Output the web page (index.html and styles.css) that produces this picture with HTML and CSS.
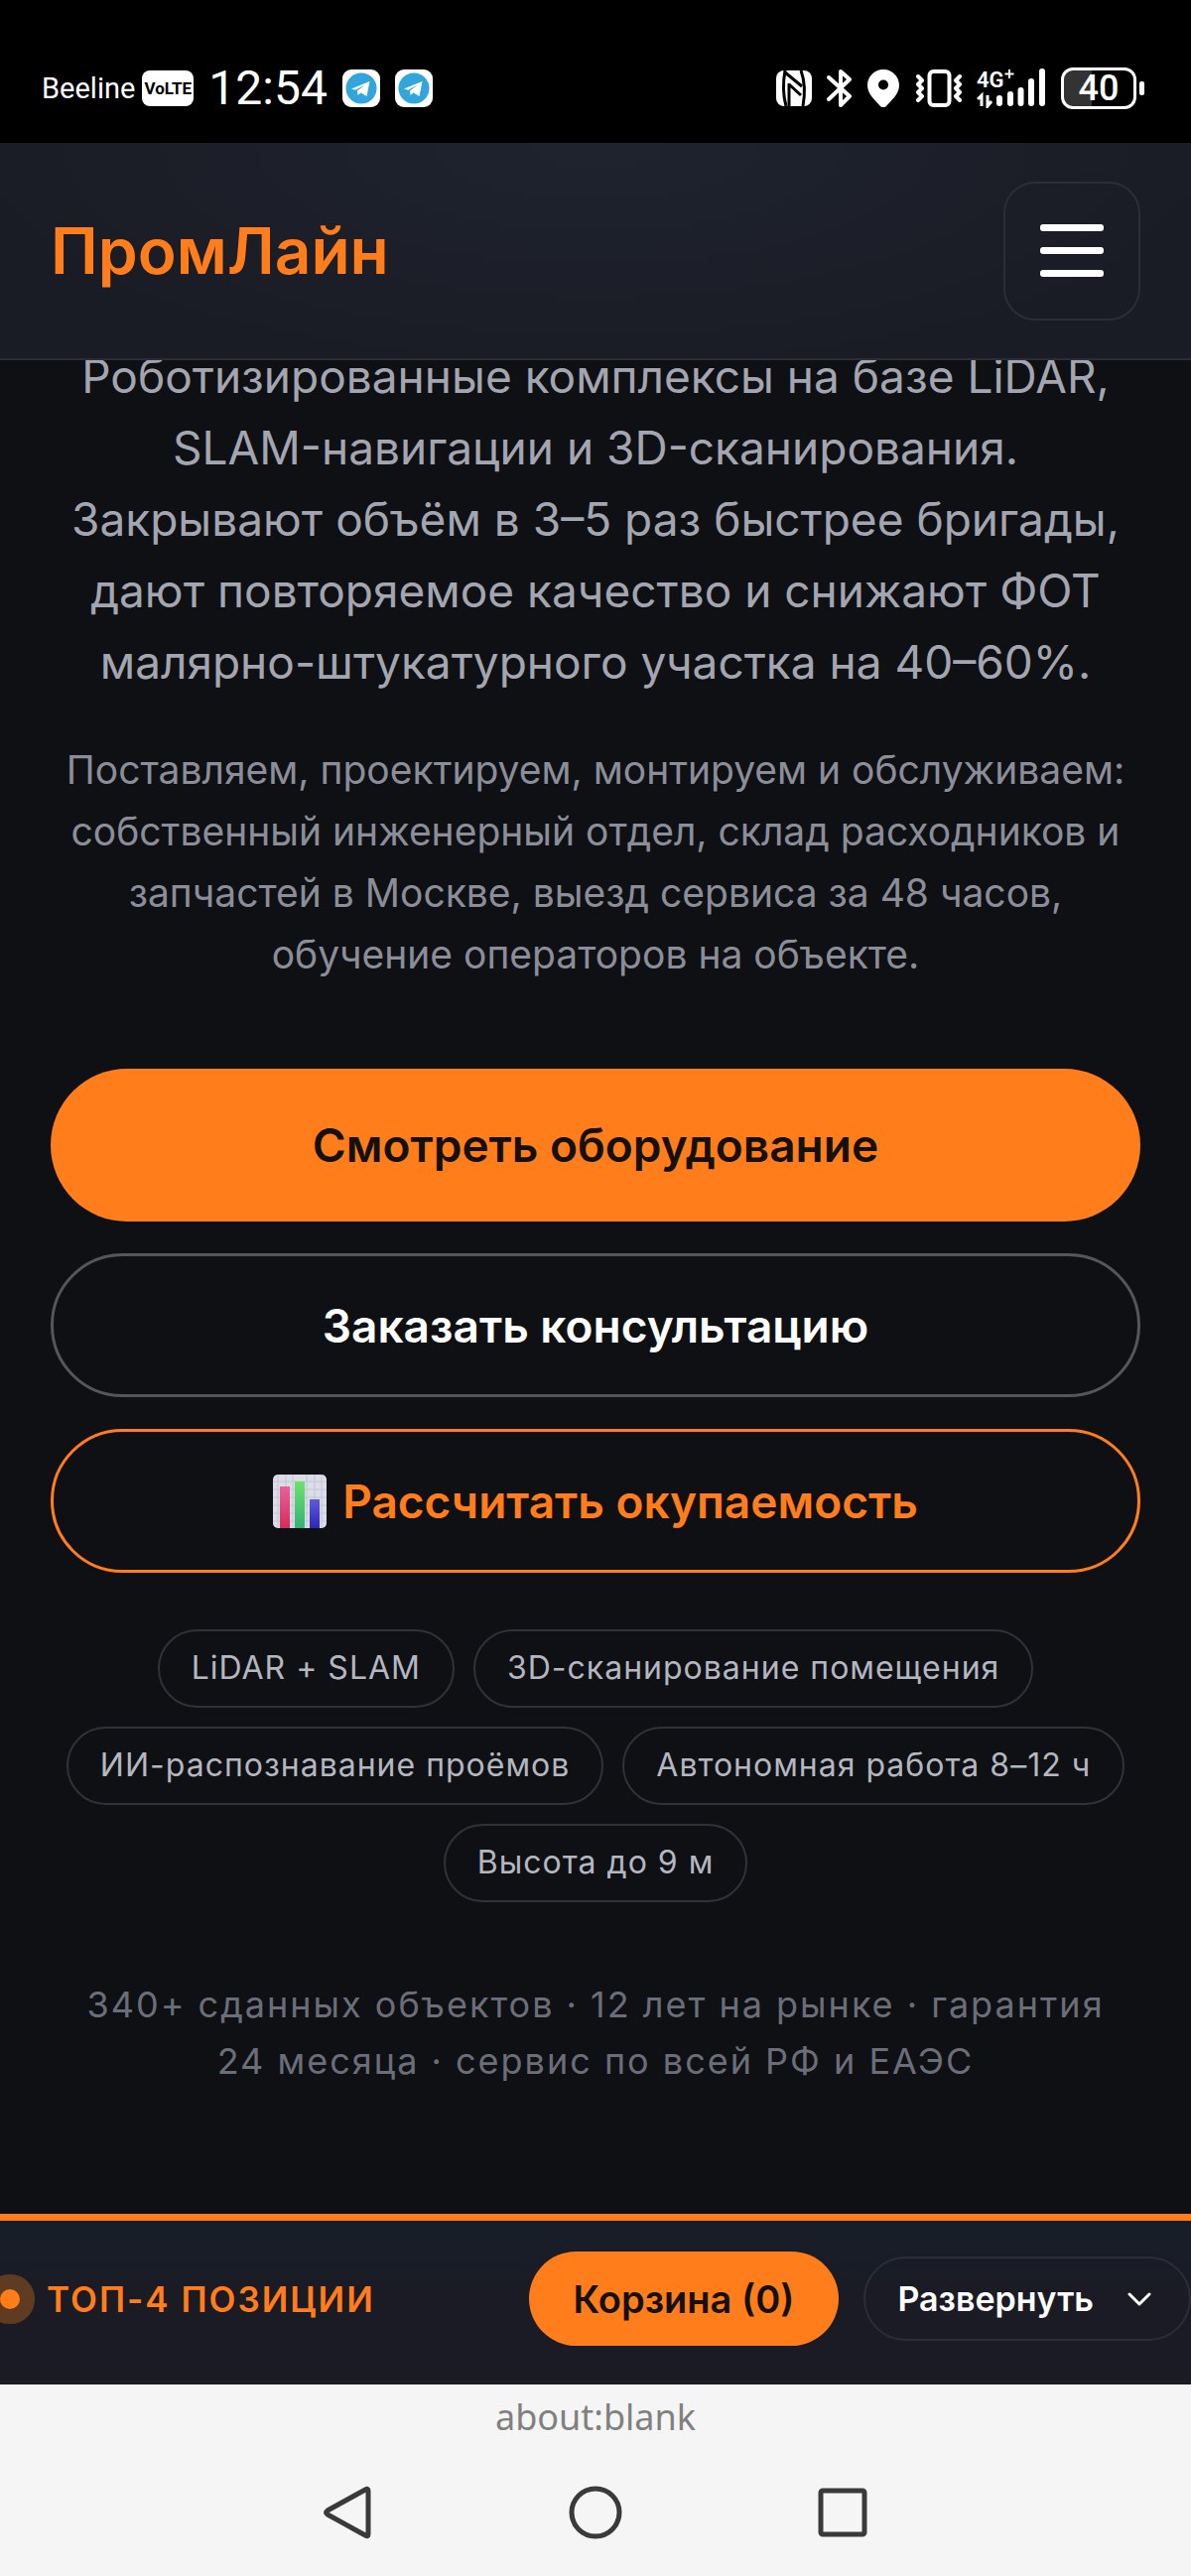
FILE: index.html
```html
<!DOCTYPE html>
<html lang="ru">
<head>
    <meta charset="UTF-8">
    <meta name="viewport" content="width=device-width, initial-scale=1.0">
    <title>ПромЛайн</title>
    <link rel="stylesheet" href="styles.css">
</head>
<body>

    <div class="status-bar">
        <div class="status-left">
            <span class="carrier">Beeline</span>
            <span class="volte">VoLTE</span>
            <span class="clock">12:54</span>
            <svg class="app-icon" viewBox="0 0 38 38">
                <rect width="38" height="38" rx="9" fill="#fff"/>
                <circle cx="19" cy="19" r="15.500" fill="#32a5dc"/>
                <path d="M9 19.500 27.500 12 24.500 27 18.500 23.500 15.500 26 15 21.500 23 15.500 13 20.800Z" fill="#fff"/>
            </svg>
            <svg class="app-icon" viewBox="0 0 38 38">
                <rect width="38" height="38" rx="9" fill="#fff"/>
                <circle cx="19" cy="19" r="15.500" fill="#32a5dc"/>
                <path d="M9 19.500 27.500 12 24.500 27 18.500 23.500 15.500 26 15 21.500 23 15.500 13 20.800Z" fill="#fff"/>
            </svg>
        </div>
        <div class="status-right">
            <!-- NFC -->
            <svg width="36" height="38" viewBox="0 0 36 38">
                <rect y="1" width="36" height="36" rx="8" fill="#fff"/>
                <path d="M9 1C7 12 7 26 10 37M25 1C29 12 29 26 27 37" fill="none" stroke="#000" stroke-width="3"/>
                <path d="M9 3 26 17M13 15 25 26M13 14V37" fill="none" stroke="#000" stroke-width="3"/>
            </svg>
            <!-- Bluetooth -->
            <svg width="26" height="38" viewBox="0 0 26 38">
                <path d="M2 8 23 27 14 36V2L23 10 2 30" fill="none" stroke="#fff" stroke-width="4" stroke-linejoin="round" stroke-linecap="round"/>
            </svg>
            <!-- Геолокация -->
            <svg width="34" height="38" viewBox="0 0 34 38">
                <path fill-rule="evenodd" d="M16 0C7 0 0 7 0 16 0 25 8 31 13 37Q16 40 19 37C24 31 32 25 32 16 32 7 25 0 16 0ZM16 10.500A5 5 0 1 1 16 20.500 5 5 0 1 1 16 10.500Z" fill="#fff"/>
            </svg>
            <!-- Вибрация -->
            <svg width="46" height="38" viewBox="0 0 46 38">
                <rect x="13.500" y="2" width="20" height="34" rx="4" fill="none" stroke="#fff" stroke-width="4"/>
                <path d="M2 7 6 11 2 15 6 19 2 23 6 27 2 31M44 7 40 11 44 15 40 19 44 23 40 27 44 31" fill="none" stroke="#fff" stroke-width="4" stroke-linecap="round" stroke-linejoin="round"/>
            </svg>
            <!-- Сигнал -->
            <svg class="signal" width="70" height="40" viewBox="0 0 70 40">
                <text x="0" y="19">4G</text>
                <path d="M33 1V10M28.500 5.500H37.500" stroke="#fff" stroke-width="2"/>
                <path d="M5 38V27L1 31M11 27V38L15 33" fill="none" stroke="#fff" stroke-width="3"/>
                <path d="M23 30V35M34 26V35M44.500 22V35M55 13V35M66 3V35" stroke="#fff" stroke-width="6" stroke-linecap="round"/>
            </svg>
            <span class="battery">40</span>
        </div>
    </div>

    <header class="header">
        <a class="logo" href="#">ПромЛайн</a>
        <button class="menu-btn" type="button" aria-label="Меню">
            <span></span>
            <span></span>
            <span></span>
        </button>
    </header>

    <main class="hero">
        <div class="hero-content">
            <p class="lead">Роботизированные комплексы на базе LiDAR, SLAM-навигации и 3D-сканирования. Закрывают объём в 3–5 раз быстрее бригады, дают повторяемое качество и снижают ФОТ малярно-штукатурного участка на 40–60%.</p>
            <p class="sub">Поставляем, проектируем, монтируем и обслуживаем: собственный инженерный отдел, склад расходников и запчастей в Москве, выезд сервиса за 48 часов, обучение операторов на объекте.</p>

            <div class="actions">
                <a class="btn btn-primary" href="#">Смотреть оборудование</a>
                <a class="btn btn-outline" href="#">Заказать консультацию</a>
                <a class="btn btn-accent" href="#">
                    <svg width="54" height="54" viewBox="0 0 54 54">
                        <defs>
                            <linearGradient id="pink" x2="0" y2="1"><stop stop-color="#e8629a"/><stop offset="1" stop-color="#d32d5b"/></linearGradient>
                            <linearGradient id="green" x2="0" y2="1"><stop stop-color="#6be368"/><stop offset="1" stop-color="#35b277"/></linearGradient>
                            <linearGradient id="blue" x2="0" y2="1"><stop stop-color="#5f5bdc"/><stop offset="1" stop-color="#2d27b4"/></linearGradient>
                        </defs>
                        <rect width="54" height="54" rx="5" fill="#dcdde8"/>
                        <path d="M0 7H54M0 15H54M0 23H54M0 31H54M0 39H54M0 47H54M5 0V54M13 0V54M20 0V54M34 0V54M42 0V54M49 0V54" stroke="#c3c6d4"/>
                        <rect x="7" y="12" width="10" height="42" fill="url(#pink)"/>
                        <rect x="22" y="7" width="10" height="47" fill="url(#green)"/>
                        <rect x="37" y="25" width="10" height="29" fill="url(#blue)"/>
                    </svg>
                    <span>Рассчитать окупаемость</span>
                </a>
            </div>

            <ul class="tags">
                <li>LiDAR + SLAM</li>
                <li>3D-сканирование помещения</li>
                <li>ИИ-распознавание проёмов</li>
                <li>Автономная работа 8–12 ч</li>
                <li>Высота до 9 м</li>
            </ul>

            <p class="facts">340+ сданных объектов · 12 лет на рынке · гарантия 24&nbsp;месяца · сервис по всей РФ и ЕАЭС</p>
        </div>
    </main>

    <section class="cart-bar">
        <div class="cart-title">
            <span class="dot"></span>
            ТОП-4 ПОЗИЦИИ
        </div>
        <div class="cart-actions">
            <button class="cart-btn" type="button">Корзина (0)</button>
            <button class="expand-btn" type="button">
                Развернуть
                <svg width="24" height="16" viewBox="0 0 24 16">
                    <path d="M2 3 12 13 22 3" fill="none" stroke="#fff" stroke-width="3" stroke-linecap="round" stroke-linejoin="round"/>
                </svg>
            </button>
        </div>
    </section>

    <footer class="browser">
        <div class="url">about:blank</div>
        <nav class="nav-keys">
            <button type="button" aria-label="Назад">
                <svg width="54" height="54" viewBox="0 0 54 54"><path d="M47 5Q47 2 44 4L6 25Q3 27 6 29L44 50Q47 52 47 49Z"/></svg>
            </button>
            <button type="button" aria-label="Домой">
                <svg width="54" height="54" viewBox="0 0 54 54"><circle cx="27" cy="27" r="24"/></svg>
            </button>
            <button type="button" aria-label="Недавние">
                <svg width="54" height="54" viewBox="0 0 54 54"><rect x="5" y="5" width="44" height="44" rx="2"/></svg>
            </button>
        </nav>
    </footer>

</body>
</html>
```
FILE: styles.css
```css
* {
    box-sizing: border-box;
}

body {
    margin: 0;
    min-height: 100vh;
    display: flex;
    flex-direction: column;
    background-color: #0f1013;
    color: #fff;
    font-family: Inter, "Noto Sans", sans-serif;
}

p, ul {
    margin: 0;
    padding: 0;
}

button {
    font-family: inherit;
    cursor: pointer;
}

/* Системная строка */
.status-bar {
    height: 144px;
    padding: 34px 55px 0 42px;
    display: flex;
    justify-content: space-between;
    align-items: center;
    background-color: #000;
    font-family: Roboto, sans-serif;
}

.status-left, .status-right {
    display: flex;
    align-items: center;
    gap: 15px;
}

.carrier {
    font-size: 29px;
}

.volte {
    width: 52px;
    height: 36px;
    margin-left: -8px;
    border-radius: 8px;
    background-color: #fff;
    color: #000;
    font-size: 17px;
    font-weight: bold;
    line-height: 36px;
    text-align: center;
}

.clock {
    font-size: 48px;
    line-height: 48px;
}

.app-icon {
    width: 38px;
    height: 38px;
}

.signal text {
    fill: #fff;
    font-size: 22px;
    font-weight: 600;
}

.battery {
    position: relative;
    width: 76px;
    height: 42px;
    border: 3px solid #fff;
    border-radius: 12px;
    background: linear-gradient(to right, #333 40%, #000 40%);
    font-size: 36px;
    font-weight: 500;
    line-height: 36px;
    text-align: center;
}

.battery::after {
    content: "";
    position: absolute;
    top: 11px;
    right: -11px;
    width: 5px;
    height: 14px;
    border-radius: 2px;
    background-color: #fff;
}

/* Шапка */
.header {
    position: relative;
    z-index: 1;
    height: 219px;
    padding: 0 51px;
    display: flex;
    justify-content: space-between;
    align-items: center;
    background: radial-gradient(ellipse at 50% 0, #1e232d, #1a1c25 75%);
    border-bottom: 2px solid #2b2e37;
}

.logo {
    color: #ff7d1a;
    font-size: 64px;
    font-weight: 600;
    text-decoration: none;
}

.menu-btn {
    width: 138px;
    height: 140px;
    display: flex;
    flex-direction: column;
    justify-content: center;
    align-items: center;
    gap: 16px;
    background: none;
    border: 2px solid #2b2e37;
    border-radius: 32px;
}

.menu-btn span {
    width: 64px;
    height: 7px;
    border-radius: 3px;
    background-color: #fff;
}

/* Первый экран */
.hero {
    flex: 1;
    padding: 0 51px;
    overflow: hidden;
    text-align: center;
}

/* страница прокручена под шапку */
.hero-content {
    margin-top: -20px;
}

.lead {
    color: #a3a6b0;
    font-size: 46px;
    line-height: 72px;
}

.sub {
    margin-top: 42px;
    color: #8b8e99;
    font-size: 39px;
    line-height: 62px;
}

.actions {
    margin-top: 84px;
    display: flex;
    flex-direction: column;
    gap: 32px;
}

.btn {
    height: 145px;
    display: flex;
    justify-content: center;
    align-items: center;
    gap: 16px;
    border: 3px solid #55565a;
    border-radius: 80px;
    color: #fff;
    font-size: 46px;
    font-weight: 600;
    text-decoration: none;
}

.btn-primary {
    height: 154px;
    border: none;
    background-color: #ff7d1a;
    color: #14110d;
}

.btn-accent {
    border-color: #ff7d1a;
    color: #ff7d1a;
}

.tags {
    margin-top: 57px;
    display: flex;
    flex-wrap: wrap;
    justify-content: center;
    gap: 19px;
    list-style: none;
}

.tags li {
    height: 79px;
    padding: 0 32px;
    border: 2px solid #2f3239;
    border-radius: 40px;
    color: #b4b7c0;
    font-size: 32px;
    line-height: 73px;
    letter-spacing: 1px;
}

.facts {
    margin-top: 75px;
    padding: 0 20px;
    color: #6b6e79;
    font-size: 36px;
    line-height: 57px;
    letter-spacing: 2px;
}

/* Нижняя панель */
.cart-bar {
    height: 172px;
    padding-bottom: 8px;
    display: flex;
    justify-content: space-between;
    align-items: center;
    border-top: 7px solid #ff7d1a;
    background: linear-gradient(#171e28, #1a1b25 40%);
}

.cart-title {
    display: flex;
    align-items: center;
    gap: 27px;
    color: #ff7d1a;
    font-size: 35px;
    font-weight: 600;
    letter-spacing: 2px;
}

.dot {
    width: 20px;
    height: 20px;
    border-radius: 50%;
    background-color: #ff7d1a;
    box-shadow: 0 0 0 15px #5f3b22;
}

.cart-actions {
    display: flex;
    align-items: center;
    gap: 25px;
}

.cart-btn {
    height: 95px;
    padding: 0 45px;
    border: none;
    border-radius: 48px;
    background-color: #ff7d1a;
    color: #14110d;
    font-size: 38px;
    font-weight: 600;
}

.expand-btn {
    height: 85px;
    padding: 0 38px 0 32px;
    display: flex;
    align-items: center;
    gap: 34px;
    border: 2px solid #2b2e37;
    border-radius: 43px;
    background: none;
    color: #fff;
    font-size: 34px;
    font-weight: 600;
}

/* Панель браузера и кнопки навигации */
.browser {
    height: 193px;
    background-color: #f5f5f5;
    text-align: center;
}

.url {
    padding-top: 8px;
    color: #808080;
    font-family: "Noto Sans", sans-serif;
    font-size: 36px;
    line-height: 50px;
}

.nav-keys {
    margin-top: 44px;
    display: flex;
    justify-content: center;
    gap: 195px;
}

.nav-keys button {
    padding: 0;
    border: none;
    background: none;
}

.nav-keys svg {
    display: block;
    fill: none;
    stroke: #3a3a3a;
    stroke-width: 5px;
}
```
